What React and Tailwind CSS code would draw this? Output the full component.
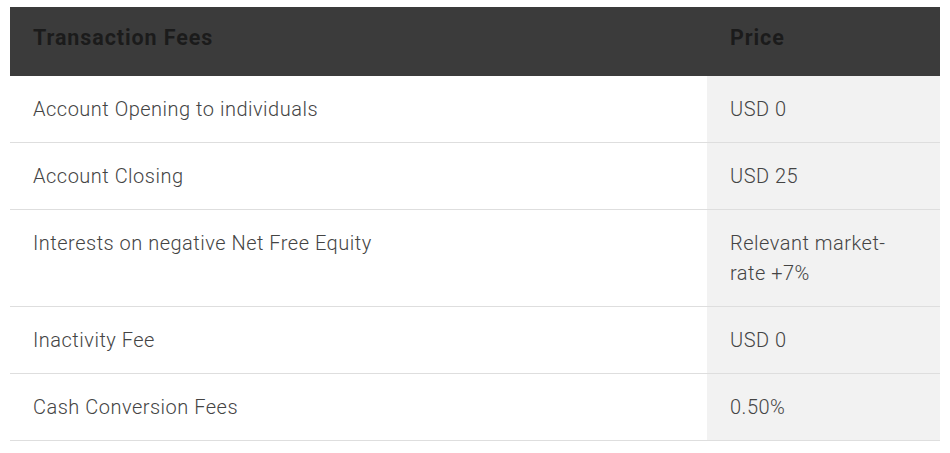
import React from 'react';

const rows = [
    { fee: 'Account Opening to individuals', price: 'USD 0' },
    { fee: 'Account Closing', price: 'USD 25' },
    { fee: 'Interests on negative Net Free Equity', price: 'Relevant market-rate +7%' },
    { fee: 'Inactivity Fee', price: 'USD 0' },
    { fee: 'Cash Conversion Fees', price: '0.50%' },
];

const App = () => {
    return (
        <div className="min-h-screen bg-white px-[10px] pt-[7px]" style={{ fontFamily: 'Roboto, "Liberation Sans", sans-serif' }}>
            <table className="w-[930px] border-collapse table-fixed">
                <thead>
                    <tr className="bg-[#3b3b3b] h-[69px]">
                        <th className="text-left pl-[23px] pb-[6px] text-[21.5px] tracking-[0.9px] font-bold text-[#1b1b1b]">Transaction Fees</th>
                        <th className="w-[233px] text-left pl-[23px] pb-[6px] text-[21.5px] tracking-[0.9px] font-bold text-[#1b1b1b]">Price</th>
                    </tr>
                </thead>
                <tbody>
                    {rows.map((row, idx) => (
                        <tr key={idx} className="border-b border-[#dedede] align-top">
                            <td className="pl-[23px] py-[18px] text-[20px] leading-[30px] tracking-[0.5px] font-light text-[#444444]">{row.fee}</td>
                            <td className="bg-[#f2f2f2] pl-[23px] pr-[30px] py-[18px] text-[20px] leading-[30px] tracking-[0.5px] font-light text-[#444444]">{row.price}</td>
                        </tr>
                    ))}
                </tbody>
            </table>
        </div>
    );
};

export default App;
